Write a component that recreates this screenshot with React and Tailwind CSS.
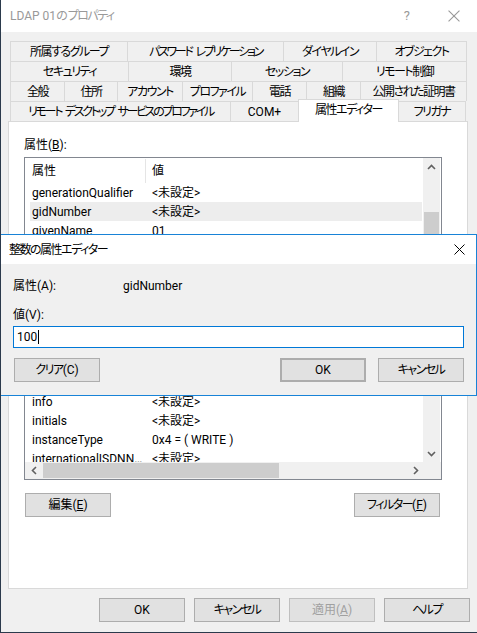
import React from 'react';

const FONT = "font-['Roboto','Noto_Sans_CJK_JP',sans-serif] [font-feature-settings:'palt']";
// Yu Gothic UI kana are narrower than Noto CJK; tighten Japanese labels
const JP = 'tracking-[-1.5px]';
const JP_TIGHT = 'tracking-[-2.3px]';

const TAB_ROWS = [
  [
    { label: '所属するグループ', w: 'w-[117px]' },
    { label: 'パスワード\u2002レプリケーション', w: 'w-[156px]', tight: true },
    { label: 'ダイヤルイン', w: 'w-[93px]' },
    { label: 'オブジェクト', w: 'w-[91px]' },
  ],
  [
    { label: 'セキュリティ', w: 'w-[118px]' },
    { label: '環境', w: 'w-[103px]' },
    { label: 'セッション', w: 'w-[111px]' },
    { label: 'リモート制御', w: 'w-[125px]' },
  ],
  [
    { label: '全般', w: 'w-[54px]' },
    { label: '住所', w: 'w-[53px]' },
    { label: 'アカウント', w: 'w-[65px]' },
    { label: 'プロファイル', w: 'w-[70px]' },
    { label: '電話', w: 'w-[54px]' },
    { label: '組織', w: 'w-[54px]' },
    { label: '公開された証明書', w: 'w-[107px]' },
  ],
];

const LAST_ROW = [
  { label: 'リモート\u2002デスクトップ\u2002サービスのプロファイル', w: 'w-[220px]', tight: true },
  { label: 'COM+', w: 'w-[68px]', latin: true },
  { label: '属性エディター', w: 'w-[101px]', active: true },
  { label: 'フリガナ', w: 'w-[67px]' },
];

const ROWS = [
  ['generationQualifier', '<未設定>'],
  ['gidNumber', '<未設定>', true],
  ['givenName', '01'],
  ['groupMembershipSAM', '<未設定>'],
  ['groupPriority', '<未設定>'],
  ['groupsToIgnore', '<未設定>'],
  ['homeDirectory', '<未設定>'],
  ['homeDrive', '<未設定>'],
  ['homePhone', '<未設定>'],
  ['homePostalAddress', '<未設定>'],
  ['houseIdentifier', '<未設定>'],
  ['info', '<未設定>'],
  ['initials', '<未設定>'],
  ['instanceType', '0x4 = ( WRITE )'],
  ['internationalISDNNumber', '<未設定>'],
];

function Chevron({ dir }) {
  if (dir === 'up' || dir === 'down') {
    const pts = dir === 'up' ? '1,5 4.5,1.5 8,5' : '1,1 4.5,4.5 8,1';
    return (
      <svg width="9" height="6" viewBox="0 0 9 6">
        <polyline points={pts} fill="none" stroke="#606060" strokeWidth="1.6" />
      </svg>
    );
  }
  const pts = dir === 'left' ? '5,1 1.5,4.5 5,8' : '1,1 4.5,4.5 1,8';
  return (
    <svg width="6" height="9" viewBox="0 0 6 9">
      <polyline points={pts} fill="none" stroke="#606060" strokeWidth="1.6" />
    </svg>
  );
}

function CloseIcon({ color = '#000', size = 11 }) {
  return (
    <svg width={size} height={size} viewBox="0 0 11 11">
      <path d="M0.5 0.5 L10.5 10.5 M10.5 0.5 L0.5 10.5" stroke={color} strokeWidth="1" fill="none" />
    </svg>
  );
}

function Button({ children, className = '' }) {
  return (
    <div
      className={`flex h-[24px] w-[86px] items-center justify-center border border-[#adadad] bg-[#e1e1e1] ${className}`}
    >
      {children}
    </div>
  );
}

function TabRow({ tabs }) {
  return (
    <div className="flex h-[20px]">
      {tabs.map((t, i) => (
        <div
          key={t.label}
          className={`flex items-center justify-center whitespace-nowrap border-t border-l border-[#d9d9d9] bg-[#f0f0f0] ${
            t.tight ? JP_TIGHT : JP
          } ${t.w} ${i === tabs.length - 1 ? 'border-r' : ''}`}
        >
          {t.label}
        </div>
      ))}
    </div>
  );
}

function AttributeList() {
  return (
    <div className="mt-[4px] flex h-[323px] w-[418px] flex-col border border-[#828790] bg-white">
      <div className="flex h-[304px]">
        {/* Content */}
        <div className="flex w-[398px] flex-col overflow-hidden">
          <div className="flex h-[25px] shrink-0 items-center">
            <div className="w-[120px] pl-[7px]">属性</div>
            <div className="h-[24px] w-px bg-[#e5e5e5]" />
            <div className="pl-[6px]">値</div>
          </div>
          <div className="flex flex-col">
            {ROWS.map(([name, value, selected]) => (
              <div
                key={name}
                className={`ml-[5px] mr-px flex h-[19px] shrink-0 items-center whitespace-nowrap ${
                  selected ? 'bg-[#ededed]' : ''
                }`}
              >
                <div className="w-[122px] pl-[2px] pr-[6px]">
                  <div className="overflow-hidden text-ellipsis">{name}</div>
                </div>
                <div>{value}</div>
              </div>
            ))}
          </div>
        </div>
        {/* Vertical scrollbar */}
        <div className="flex w-[17px] flex-col bg-[#f0f0f0]">
          <div className="flex h-[17px] items-center justify-center">
            <Chevron dir="up" />
          </div>
          <div className="h-[37px]" />
          <div className="mx-px h-[150px] bg-[#cdcdcd]" />
          <div className="flex-1" />
          <div className="flex h-[17px] items-center justify-center">
            <Chevron dir="down" />
          </div>
        </div>
      </div>
      {/* Horizontal scrollbar */}
      <div className="flex h-[17px] bg-[#f0f0f0]">
        <div className="flex w-[17px] items-center justify-center">
          <Chevron dir="left" />
        </div>
        <div className="ml-px my-px w-[236px] bg-[#cdcdcd]" />
        <div className="flex-1" />
        <div className="flex w-[17px] items-center justify-center">
          <Chevron dir="right" />
        </div>
        <div className="w-[17px]" />
      </div>
    </div>
  );
}

function IntegerEditor() {
  return (
    <div className="absolute left-[-1px] top-[234px] flex h-[162px] w-[477px] flex-col border border-[#1883d7] bg-[#f0f0f0]">
      <div className="flex h-[29px] items-center justify-between bg-white pl-[8px] pr-[11px]">
        <span className={JP}>整数の属性エディター</span>
        <CloseIcon />
      </div>
      <div className="flex flex-col px-[12px] pt-[14px]">
        <div className="flex h-[16px] items-center">
          <div className="w-[110px]">属性(A):</div>
          <div>gidNumber</div>
        </div>
        <div className="mt-[13px] flex h-[16px] items-center">値(V):</div>
        <div className="mt-[3px] flex h-[22px] items-center border border-[#0078d7] bg-white pl-[3px]">
          <span>100</span>
          <span className="ml-px h-[14px] w-px bg-black" />
        </div>
        <div className="mt-[10px] flex items-center">
          <Button className="ml-px h-[23px]">
            <span className={JP}>クリア</span>(C)
          </Button>
          <div className="flex-1" />
          <Button className="h-[23px] border-2 border-[#0078d7]">OK</Button>
          <Button className={`ml-[12px] h-[23px] ${JP}`}>キャンセル</Button>
        </div>
      </div>
    </div>
  );
}

export default function App() {
  return (
    <div
      className={`relative h-[633px] w-[477px] overflow-hidden border-b border-l border-[#2b3a4c] bg-[#f0f0f0] text-[12px] leading-[16px] text-black ${FONT}`}
    >
      {/* Title bar */}
      <div className="flex h-[32px] items-center bg-white pl-[9px] text-[#999999]">
        <span>
          LDAP 01の<span className={JP}>プロパティ</span>
        </span>
        <div className="flex-1" />
        <span className="mr-[38px] text-[13px]">?</span>
        <div className="mr-[17px]">
          <CloseIcon color="#999999" size={12} />
        </div>
      </div>

      {/* Tabs */}
      <div className="ml-[9px] mt-[9px] w-[457px]">
        {TAB_ROWS.map((row, i) => (
          <TabRow key={i} tabs={row} />
        ))}
        <div className="flex h-[20px] items-end">
          {LAST_ROW.map((t, i) =>
            t.active ? (
              <div
                key={t.label}
                className={`relative top-px z-10 flex h-[23px] items-start justify-center border-x border-t border-[#d9d9d9] bg-white pt-[2px] ${JP} ${t.w}`}
              >
                {t.label}
              </div>
            ) : (
              <div
                key={t.label}
                className={`flex h-[20px] items-center justify-center whitespace-nowrap border-t border-[#d9d9d9] bg-[#f0f0f0] ${t.w} ${
                  t.latin ? '' : t.tight ? JP_TIGHT : JP
                } ${i <= 1 ? 'border-l' : ''} ${i === LAST_ROW.length - 1 ? 'border-r' : ''}`}
              >
                {t.label}
              </div>
            )
          )}
        </div>
      </div>

      {/* Tab panel */}
      <div className="ml-[7px] flex h-[468px] w-[460px] flex-col border border-[#d9d9d9] bg-white pl-[15px] pt-[15px]">
        <div className="h-[16px]">
          属性(<span className="underline">B</span>):
        </div>
        <AttributeList />
        <div className="mt-[13px] flex w-[418px] justify-between pl-px pr-[2px]">
          <Button>
            編集(<span className="underline">E</span>)
          </Button>
          <Button>
            <span className={JP}>フィルター</span>(<span className="underline">F</span>)
          </Button>
        </div>
      </div>

      {/* Dialog buttons */}
      <div className="mt-[9px] flex gap-[9px] pl-[98px]">
        <Button>OK</Button>
        <Button className={JP}>キャンセル</Button>
        <Button className="border-[#bfbfbf] bg-[#cccccc] text-[#a0a0a0]">
          適用(<span className="underline">A</span>)
        </Button>
        <Button className={JP}>ヘルプ</Button>
      </div>

      <IntegerEditor />
    </div>
  );
}
